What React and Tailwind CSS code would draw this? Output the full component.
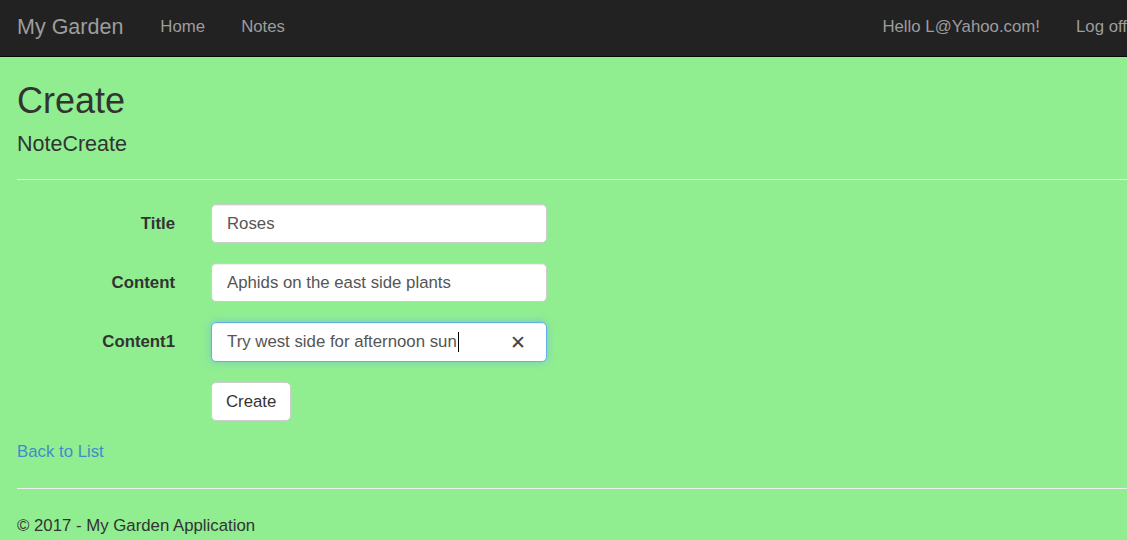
const fields = [
  { label: "Title", value: "Roses" },
  { label: "Content", value: "Aphids on the east side plants" },
];

export default function App() {
  return (
    <div className="min-h-[540px] w-full overflow-hidden bg-[#90ee90] font-['Liberation_Sans',Arial,sans-serif] text-[16.8px] text-[#333]">
      <nav className="flex h-[57px] items-center border-b border-[#080808] bg-[#222] pb-[2px] text-[#9d9d9d]">
        <a className="pl-[17px] pr-[19px] text-[21.5px]">My Garden</a>
        <ul className="flex">
          <li className="px-[18px]">Home</li>
          <li className="px-[18px]">Notes</li>
        </ul>
        <ul className="ml-auto mr-[-18px] flex whitespace-nowrap">
          <li className="px-[18px]">Hello L@Yahoo.com!</li>
          <li className="px-[18px]">Log off</li>
        </ul>
      </nav>

      <main className="pl-[17px]">
        <h1 className="mt-[24px] text-[36px] leading-[40px]">Create</h1>
        <h4 className="mt-[11px] text-[21.5px] leading-[24px]">NoteCreate</h4>
        <hr className="mt-[23px] border-t border-[#eee]" />

        <form className="mt-[24px] flex flex-col gap-[20px]" onSubmit={(e) => e.preventDefault()}>
          {fields.map((f) => (
            <div key={f.label} className="flex items-center gap-[36px]">
              <label className="w-[158px] text-right font-bold">{f.label}</label>
              <input
                readOnly
                value={f.value}
                className="h-[39px] w-[336px] rounded-[5px] border border-[#ccc] bg-white px-[15px] text-[#555] shadow-[inset_0_1px_1px_rgba(0,0,0,0.075)] outline-none"
              />
            </div>
          ))}
          <div className="flex items-center gap-[36px]">
            <label className="w-[158px] text-right font-bold">Content1</label>
            <div className="flex h-[40px] w-[336px] items-center rounded-[5px] border border-[#66afe9] bg-white pl-[15px] pr-[20px] text-[#555] shadow-[inset_0_1px_1px_rgba(0,0,0,0.075),0_0_8px_rgba(102,175,233,0.6)]">
              <span>Try west side for afternoon sun</span>
              <span className="ml-px h-[20px] w-px bg-black" />
              <span className="ml-auto text-[19px] leading-none text-[#444]">✕</span>
            </div>
          </div>
          <div className="flex gap-[36px]">
            <span className="w-[158px]" />
            <button
              type="submit"
              className="h-[39px] rounded-[5px] border border-[#ccc] bg-white px-[14px] text-[#333]"
            >
              Create
            </button>
          </div>
        </form>

        <div className="mt-[19px] leading-[23px] text-[#428bca]">
          <a>Back to List</a>
        </div>

        <hr className="mt-[25px] border-t border-[#eee]" />
        <footer className="mt-[25px] leading-[23px]">
          <p>© 2017 - My Garden Application</p>
        </footer>
      </main>
    </div>
  );
}
